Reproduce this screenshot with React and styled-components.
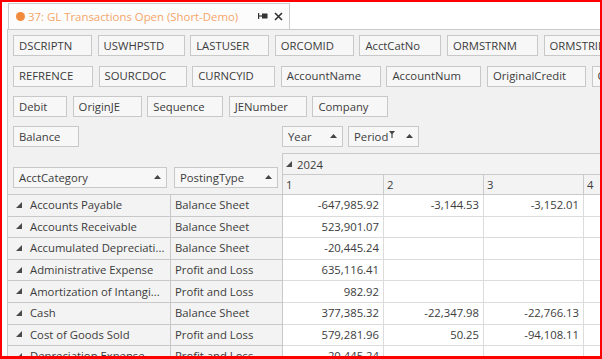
import styled, { createGlobalStyle } from "styled-components";

const GlobalStyle = createGlobalStyle`
  body {
    margin: 0;
    background: #ffffff;
  }
`;

const fieldRows = [
  [
    ["DSCRIPTN", 79],
    ["USWHPSTD", 87],
    ["LASTUSER", 79],
    ["ORCOMID", 79],
    ["AcctCatNo", 82],
    ["ORMSTRNM", 91],
    ["ORMSTRID", 90],
  ],
  [
    ["REFRENCE", 80],
    ["SOURCDOC", 88],
    ["CURNCYID", 83],
    ["AccountName", 100],
    ["AccountNum", 95],
    ["OriginalCredit", 99],
    ["OriginalDebit", 90],
  ],
  [
    ["Debit", 54],
    ["OriginJE", 69],
    ["Sequence", 76],
    ["JENumber", 78],
    ["Company", 76],
  ],
];

const rows = [
  ["Accounts Payable", "Balance Sheet", "-647,985.92", "-3,144.53", "-3,152.01"],
  ["Accounts Receivable", "Balance Sheet", "523,901.07", "", ""],
  ["Accumulated Depreciati...", "Balance Sheet", "-20,445.24", "", ""],
  ["Administrative Expense", "Profit and Loss", "635,116.41", "", ""],
  ["Amortization of Intangi...", "Profit and Loss", "982.92", "", ""],
  ["Cash", "Balance Sheet", "377,385.32", "-22,347.98", "-22,766.13"],
  ["Cost of Goods Sold", "Profit and Loss", "579,281.96", "50.25", "-94,108.11"],
  ["Depreciation Expense", "Profit and Loss", "20,445.24", "", ""],
];

const colWidths = [101, 100, 100, 100];

const Expander = () => (
  <svg width="6" height="6" viewBox="0 0 6 6">
    <polygon points="6,0 6,6 0,6" fill="#4a4a4a" />
  </svg>
);

const SortUp = () => (
  <svg width="7" height="4" viewBox="0 0 7 4">
    <polygon points="3.5,0 7,4 0,4" fill="#444" />
  </svg>
);

const Funnel = () => (
  <svg width="6" height="7" viewBox="0 0 6 7">
    <polygon points="0,0 6,0 3.6,3 3.6,7 2.4,7 2.4,3" fill="#444" />
  </svg>
);

const PinIcon = () => (
  <svg width="10" height="8" viewBox="0 0 10 8">
    <rect x="0" y="1" width="1.2" height="6" fill="#333" />
    <rect x="1" y="3.4" width="3" height="1.2" fill="#333" />
    <rect x="4" y="1.5" width="5.5" height="5" fill="#333" />
  </svg>
);

const CloseIcon = () => (
  <svg width="9" height="9" viewBox="0 0 9 9">
    <path d="M1 1 L8 8 M8 1 L1 8" stroke="#333" strokeWidth="1.6" />
  </svg>
);

const App = () => {
  return (
    <>
      <GlobalStyle />
      <Frame>
        <TabStrip>
          <Tab>
            <Dot />
            <TabTitle>37: GL Transactions Open (Short-Demo)</TabTitle>
            <TabIcons>
              <PinIcon />
              <CloseIcon />
            </TabIcons>
          </Tab>
        </TabStrip>
        <Panel>
          <FieldRows>
            {fieldRows.map((row, i) => (
              <FieldRow key={i}>
                {row.map(([name, w]) => (
                  <FieldBox key={name} $w={w}>
                    {name}
                  </FieldBox>
                ))}
              </FieldRow>
            ))}
          </FieldRows>
          <PivotTop>
            <LeftArea>
              <FieldBox $w={66}>Balance</FieldBox>
              <HeaderBoxes>
                <SortBox $w={154}>
                  AcctCategory
                  <SortUp />
                </SortBox>
                <SortBox $w={104}>
                  PostingType
                  <SortUp />
                </SortBox>
              </HeaderBoxes>
            </LeftArea>
            <RightArea>
              <HeaderBoxes $top={0}>
                <SortBox $w={61}>
                  Year
                  <SortUp />
                </SortBox>
                <SortBox $w={71}>
                  <FilteredLabel>
                    Period
                    <Funnel />
                  </FilteredLabel>
                  <SortUp />
                </SortBox>
              </HeaderBoxes>
              <GridHeader>
                <YearRow>
                  <Expander />
                  <span>2024</span>
                </YearRow>
                <ColRow>
                  {colWidths.map((w, i) => (
                    <ColCell key={i} $w={w}>
                      {i + 1}
                    </ColCell>
                  ))}
                </ColRow>
              </GridHeader>
            </RightArea>
          </PivotTop>
          <Body>
            {rows.map((r) => (
              <Row key={r[0]}>
                <LabelCell>
                  <Expander />
                  <span>{r[0]}</span>
                </LabelCell>
                <TypeCell>{r[1]}</TypeCell>
                <ValueCell $w={101}>{r[2]}</ValueCell>
                <ValueCell $w={100}>{r[3]}</ValueCell>
                <ValueCell $w={100}>{r[4]}</ValueCell>
                <ValueCell $w={100} />
              </Row>
            ))}
          </Body>
        </Panel>
      </Frame>
    </>
  );
};

const Frame = styled.div`
  width: 602px;
  height: 359px;
  box-sizing: border-box;
  border: 2px solid #ff0000;
  border-bottom-width: 3px;
  background: #ffffff;
  overflow: hidden;
  padding: 1px 0 0 5px;
  display: flex;
  flex-direction: column;
  font-family: "Open Sans", sans-serif;
  color: #3c3c3c;
`;

const TabStrip = styled.div`
  display: flex;
  padding-left: 1px;
`;

const Tab = styled.div`
  width: 282px;
  height: 26px;
  box-sizing: border-box;
  border: 1px solid #cacaca;
  border-bottom: none;
  background: #fcfcfc;
  display: flex;
  align-items: center;
  padding: 0 6px 1px 7px;
`;

const Dot = styled.div`
  width: 9px;
  height: 9px;
  border-radius: 50%;
  background: #f28a3c;
  margin-right: 3px;
  flex-shrink: 0;
`;

const TabTitle = styled.div`
  font-size: 11.4px;
  color: #f4a56a;
  white-space: nowrap;
`;

const TabIcons = styled.div`
  display: flex;
  align-items: center;
  gap: 6px;
  margin-left: auto;
`;

const Panel = styled.div`
  flex: 1;
  min-height: 0;
  border-top: 1px solid #cacaca;
  border-left: 1px solid #cacaca;
  background: #f1f1f1;
  overflow: hidden;
`;

const FieldRows = styled.div`
  display: flex;
  flex-direction: column;
  gap: 9.5px;
  padding: 5px 0 0 5px;
`;

const FieldRow = styled.div`
  display: flex;
  gap: 5.6px;
`;

const FieldBox = styled.div`
  flex-shrink: 0;
  width: ${(p) => p.$w}px;
  height: 21px;
  box-sizing: border-box;
  border: 1px solid #c8c8c8;
  background: #f7f7f7;
  padding: 0 5px 1px 5px;
  display: flex;
  align-items: center;
  font-size: 11.3px;
  white-space: nowrap;
  overflow: hidden;
`;

const SortBox = styled(FieldBox)`
  justify-content: space-between;
  padding-right: 5px;
`;

const FilteredLabel = styled.span`
  display: inline-flex;
  align-items: flex-start;
  gap: 1px;

  svg {
    margin-top: 2px;
  }
`;

const PivotTop = styled.div`
  display: flex;
  align-items: flex-start;
  margin-top: 9px;
`;

const LeftArea = styled.div`
  width: 274px;
  flex-shrink: 0;
  box-sizing: border-box;
  padding-left: 5px;
`;

const HeaderBoxes = styled.div`
  display: flex;
  gap: ${(p) => (p.$top === 0 ? 5 : 7)}px;
  margin-top: ${(p) => (p.$top === 0 ? 0 : 20)}px;
`;

const RightArea = styled.div`
  flex: 1;
  min-width: 0;
`;

const GridHeader = styled.div`
  margin-top: 6px;
  border-top: 1px solid #cacaca;
  border-left: 1px solid #cacaca;
  background: #f3f3f3;
`;

const YearRow = styled.div`
  height: 20px;
  border-bottom: 1px solid #cacaca;
  display: flex;
  align-items: center;
  gap: 5px;
  padding-left: 3px;
  font-size: 11.3px;
`;

const ColRow = styled.div`
  display: flex;
  height: 19px;
`;

const ColCell = styled.div`
  flex-shrink: 0;
  width: ${(p) => p.$w}px;
  box-sizing: border-box;
  border-right: 1px solid #cacaca;
  padding: 2px 0 0 3px;
  font-size: 11.3px;
`;

const Body = styled.div`
  border-top: 1px solid #cacaca;
`;

const Row = styled.div`
  display: flex;
  height: 21.6px;
  box-sizing: border-box;
  font-size: 11.3px;
`;

const LabelCell = styled.div`
  flex-shrink: 0;
  width: 163px;
  box-sizing: border-box;
  background: #f3f3f3;
  border-right: 1px solid #c8c8c8;
  border-bottom: 1px solid #c8c8c8;
  display: flex;
  align-items: center;
  gap: 8px;
  padding: 0 0 1px 8px;
  white-space: nowrap;
`;

const TypeCell = styled.div`
  flex-shrink: 0;
  width: 112px;
  box-sizing: border-box;
  background: #f3f3f3;
  border-right: 1px solid #c8c8c8;
  border-bottom: 1px solid #c8c8c8;
  display: flex;
  align-items: center;
  padding: 0 0 1px 4px;
  white-space: nowrap;
`;

const ValueCell = styled.div`
  flex-shrink: 0;
  width: ${(p) => p.$w}px;
  box-sizing: border-box;
  background: #ffffff;
  border-right: 1px solid #dcdcdc;
  border-bottom: 1px solid #dcdcdc;
  display: flex;
  align-items: center;
  justify-content: flex-end;
  padding: 0 4px 1px 0;
  white-space: nowrap;
`;

export default App;
